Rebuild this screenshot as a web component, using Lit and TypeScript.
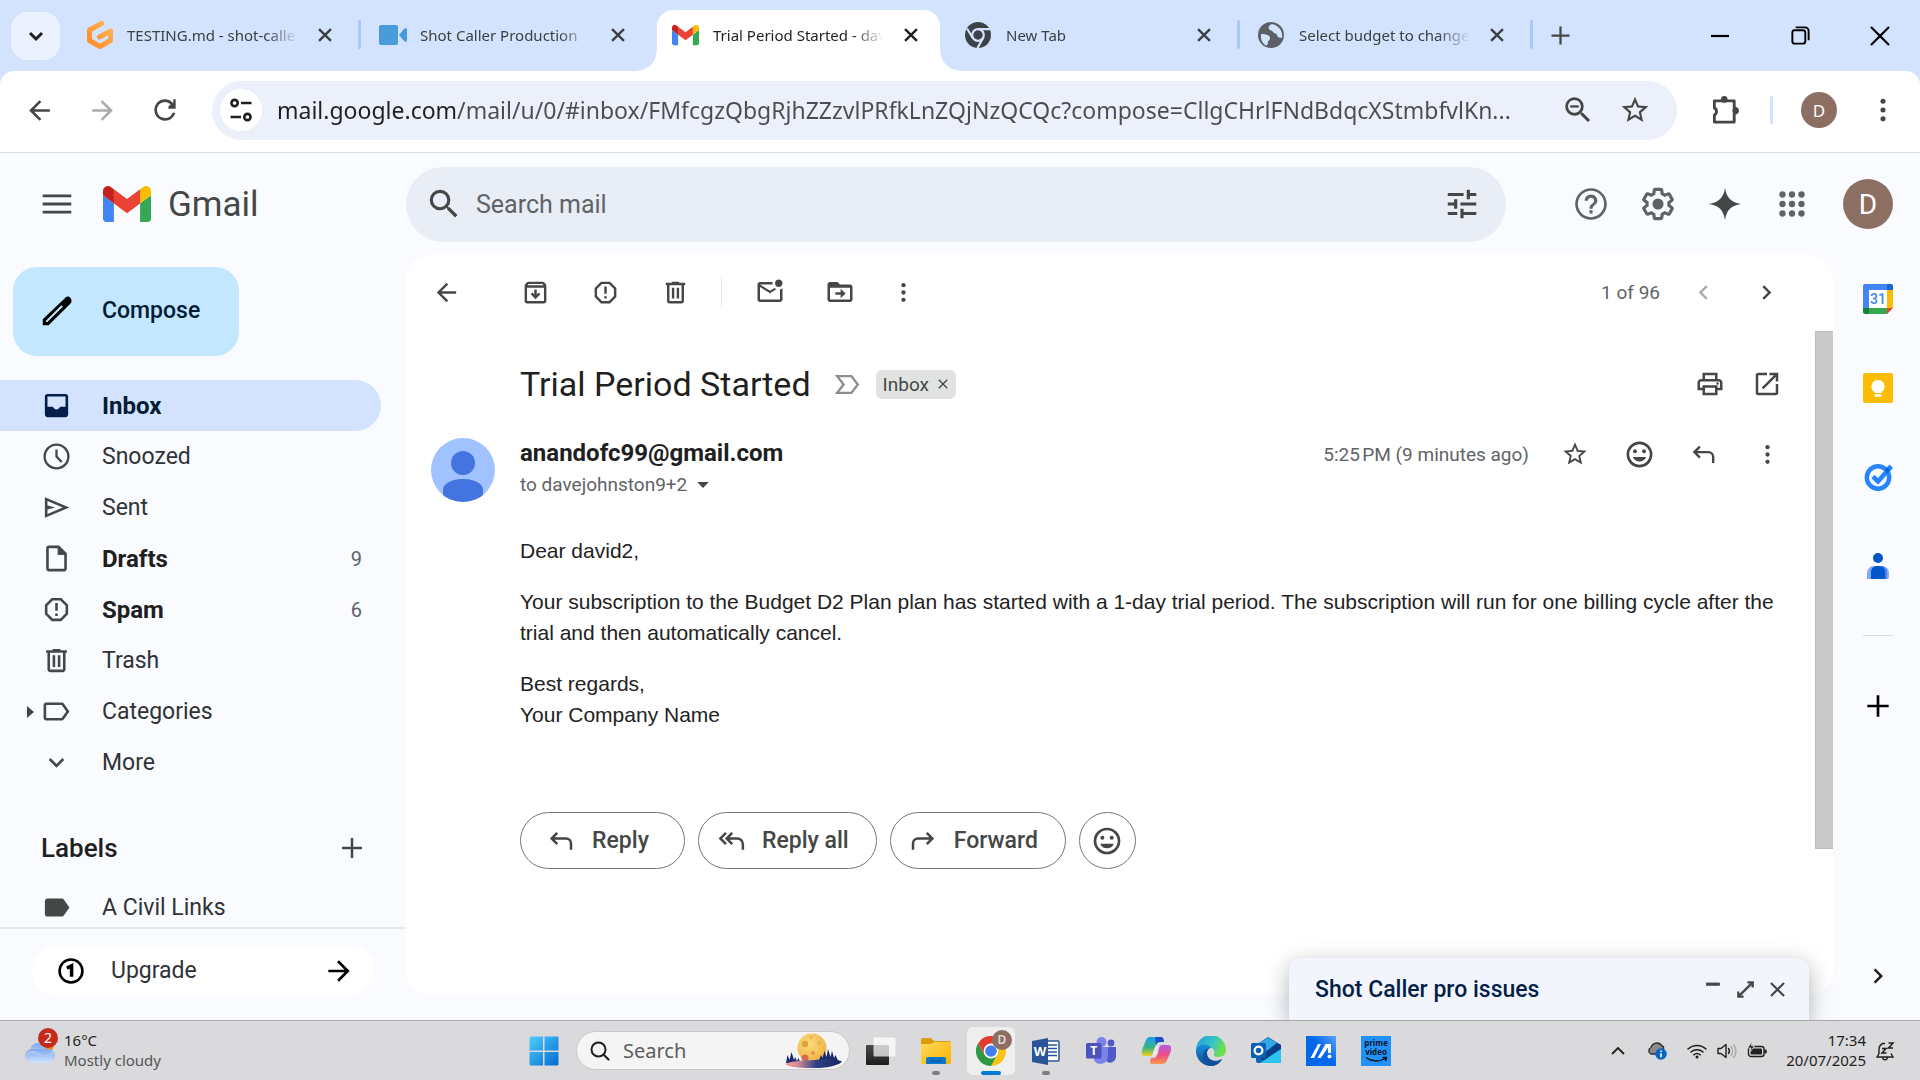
import { LitElement, html, css, svg, nothing, TemplateResult } from "lit";
import { customElement } from "lit/decorators.js";
import { classMap } from "lit/directives/class-map.js";

const ring = svg`<circle cx="12" cy="12" r="9" fill="none" stroke="currentColor" stroke-width="2"/>`;
const SEARCH = "M15.5 14h-.79l-.28-.27A6.471 6.471 0 0 0 16 9.5 6.5 6.5 0 1 0 9.5 16c1.61 0 3.09-.59 4.23-1.57l.27.28v.79l5 4.99L20.49 19l-4.99-5zm-6 0C7.01 14 5 11.99 5 9.5S7.01 5 9.5 5 14 7.01 14 9.5 11.99 14 9.5 14z";

/* Glyphs on a 24 x 24 grid, drawn in the current colour. */
const GLYPHS: Record<string, unknown> = {
  menu: svg`<path d="M3 18h18v-1.800H3zM3 12.900h18v-1.800H3zM3 6v1.800h18V6z"/>`,
  search: svg`<path d=${SEARCH}/>`,
  zoomOut: svg`<path d=${SEARCH}/><path d="M6.500 8.700h6v1.600h-6z"/>`,
  tune: svg`<path d="M3 17v2h6v-2H3zM3 5v2h10V5H3zm10 16v-2h8v-2h-8v-2h-2v6h2zM7 9v2H3v2h4v2h2V9H7zm14 4v-2H11v2h10zm-6-4h2V7h4V5h-4V3h-2v6z"/>`,
  help: svg`<path d="M11 18h2v-2h-2v2zm1-16C6.480 2 2 6.480 2 12s4.480 10 10 10 10-4.480 10-10S17.520 2 12 2zm0 18.300c-4.550 0-8.300-3.750-8.300-8.300s3.750-8.300 8.300-8.300 8.300 3.750 8.300 8.300-3.750 8.300-8.300 8.300zm0-14.300c-2.210 0-4 1.790-4 4h2c0-1.100.9-2 2-2s2 .9 2 2c0 2-3 1.750-3 5h2c0-2.250 3-2.500 3-5 0-2.210-1.790-4-4-4z"/>`,
  gear: svg`<path d="M13.85 22.25h-3.700c-.74 0-1.360-.54-1.450-1.270l-.27-1.890c-.27-.14-.53-.29-.79-.46l-1.800.72c-.7.26-1.470-.03-1.810-.65L2.200 15.530c-.35-.66-.2-1.440.36-1.880l1.530-1.190c-.01-.15-.02-.3-.02-.46 0-.15.01-.31.02-.46l-1.520-1.190c-.59-.45-.74-1.260-.37-1.880l1.850-3.190c.34-.62 1.110-.9 1.790-.63l1.810.73c.26-.17.52-.32.78-.46l.27-1.910c.09-.7.71-1.250 1.440-1.250h3.700c.74 0 1.360.54 1.450 1.270l.27 1.890c.27.14.53.29.79.46l1.800-.72c.71-.26 1.480.03 1.820.65l1.840 3.180c.36.66.2 1.440-.36 1.880l-1.520 1.190c.01.15.02.3.02.46s-.01.31-.02.46l1.520 1.190c.56.45.72 1.230.37 1.860l-1.860 3.220c-.34.62-1.110.9-1.800.63l-1.800-.72c-.26.17-.52.32-.78.46l-.27 1.910c-.1.68-.72 1.220-1.460 1.220zm-3.230-2h2.760l.37-2.550.53-.22c.44-.18.88-.44 1.340-.78l.45-.34 2.380.96 1.380-2.400-2.030-1.580.07-.56c.03-.26.06-.51.06-.78s-.03-.53-.06-.78l-.07-.56 2.030-1.580-1.390-2.400-2.390.96-.45-.35c-.42-.32-.87-.58-1.330-.77l-.52-.22-.37-2.550h-2.760l-.37 2.550-.53.21c-.44.19-.88.44-1.340.79l-.45.33-2.380-.95-1.390 2.390 2.030 1.580-.07.56a7 7 0 0 0-.06.79c0 .26.02.53.06.78l.07.56-2.030 1.580 1.380 2.400 2.390-.96.45.35c.43.33.86.58 1.330.77l.53.22.38 2.550z"/><circle cx="12" cy="12" r="3.500"/>`,
  spark: svg`<path d="M12 1.800C12.800 8 16 11.200 22.200 12 16 12.800 12.800 16 12 22.200 11.200 16 8 12.800 1.800 12 8 11.200 11.200 8 12 1.800z"/>`,
  apps: svg`${[6, 12, 18].map((y) => [6, 12, 18].map((x) => svg`<circle cx=${x} cy=${y} r="2"/>`))}`,
  back: svg`<path d="M20 11H7.830l5.590-5.590L12 4l-8 8 8 8 1.410-1.410L7.830 13H20v-2z"/>`,
  forward: svg`<path d="M12 4l-1.410 1.410L16.170 11H4v2h12.170l-5.580 5.590L12 20l8-8z"/>`,
  reload: svg`<path d="M17.650 6.350A7.958 7.958 0 0 0 12 4c-4.420 0-7.990 3.580-7.990 8s3.570 8 7.990 8c3.730 0 6.840-2.550 7.730-6h-2.080A5.990 5.990 0 0 1 12 18c-3.310 0-6-2.690-6-6s2.690-6 6-6c1.660 0 3.140.69 4.220 1.780L14.500 9.500V11H20V4h-1.800v2.900z"/>`,
  star: svg`<path d="M22 9.240l-7.190-.62L12 2 9.190 8.630 2 9.240l5.460 4.730L5.820 21 12 17.270 18.180 21l-1.630-7.030L22 9.240zM12 15.400l-3.760 2.270 1-4.280-3.320-2.880 4.380-.38L12 6.100l1.710 4.040 4.380.38-3.320 2.880 1 4.280L12 15.400z"/>`,
  puzzle: svg`<path d="M4.500 5.500h14v5a2 2 0 0 1 0 4v6h-14v-5a2.800 2.800 0 0 0 0-5z" fill="none" stroke="currentColor" stroke-width="2" stroke-linejoin="round"/><circle cx="11.500" cy="4.500" r="2.300"/><circle cx="19.500" cy="12.500" r="2.300"/>`,
  more: svg`<circle cx="12" cy="5.500" r="1.900"/><circle cx="12" cy="12" r="1.900"/><circle cx="12" cy="18.500" r="1.900"/>`,
  sliders: svg`<g fill="none" stroke="currentColor" stroke-width="2.200"><circle cx="6.500" cy="6" r="2.700"/><path d="M12 6h9M3 18h9"/><circle cx="17.500" cy="18" r="2.700"/></g>`,
  archive: svg`<path d="M20.540 5.230l-1.390-1.680C18.880 3.210 18.470 3 18 3H6c-.47 0-.88.21-1.160.55L3.460 5.230C3.170 5.570 3 6.020 3 6.500V19c0 1.100.9 2 2 2h14c1.100 0 2-.9 2-2V6.500c0-.48-.17-.93-.46-1.270zM6.240 5h11.520l.83 1H5.420l.82-1zM5 19V8h14v11H5z"/><path d="M11 9.500v4.200l-1.600-1.600L8 13.500l4 4 4-4-1.400-1.400-1.600 1.600V9.500z"/>`,
  report: svg`<path d="M15.730 3H8.270L3 8.270v7.460L8.270 21h7.460L21 15.730V8.270L15.730 3zM19 14.900L14.900 19H9.100L5 14.900V9.100L9.100 5h5.800L19 9.100v5.800z"/><path d="M11 7h2v6h-2zM11 15h2v2h-2z"/>`,
  trash: svg`<path d="M15 4V3H9v1H4v2h1v13c0 1.100.9 2 2 2h10c1.100 0 2-.9 2-2V6h1V4h-5zm2 15H7V6h10v13zM9 8h2v9H9zm4 0h2v9h-2z"/>`,
  unread: svg`<path d="M22 8.980V18c0 1.100-.9 2-2 2H4c-1.100 0-2-.9-2-2V6c0-1.100.9-2 2-2h10.100c-.06.32-.1.66-.1 1s.04.68.1 1H4l8 5 3.670-2.290c.47.43 1.020.76 1.630.98L12 13 4 8v10h16V9.900c.74-.15 1.420-.48 2-.92zM16 5c0 1.660 1.340 3 3 3s3-1.340 3-3-1.340-3-3-3-3 1.340-3 3z"/>`,
  move: svg`<path d="M20 6h-8l-2-2H4c-1.100 0-2 .9-2 2v12c0 1.100.9 2 2 2h16c1.100 0 2-.9 2-2V8c0-1.100-.9-2-2-2zm0 12H4V8.500h16V18z"/><path d="M12.500 17l4-3.800-4-3.800v2.800H8.300v2h4.200z"/>`,
  chevronLeft: svg`<path d="M15.410 7.410L14 6l-6 6 6 6 1.410-1.410L10.830 12z"/>`,
  chevronRight: svg`<path d="M10 6L8.590 7.410 13.170 12l-4.580 4.590L10 18l6-6z"/>`,
  chevronDown: svg`<path d="M7.410 8.590L12 13.170l4.590-4.580L18 10l-6 6-6-6z"/>`,
  tabDown: svg`<path d="M6 9l6 6 6-6" fill="none" stroke="currentColor" stroke-width="3"/>`,
  close: svg`<path d="M19 6.410L17.590 5 12 10.590 6.410 5 5 6.410 10.590 12 5 17.590 6.410 19 12 13.410 17.590 19 19 17.590 13.410 12z"/>`,
  tabClose: svg`<path d="M5.500 5.500l13 13M18.500 5.500l-13 13" stroke="currentColor" stroke-width="2.600"/>`,
  plus: svg`<path d="M20 11h-7V4h-2v7H4v2h7v7h2v-7h7z"/>`,
  print: svg`<path d="M19 8h-1V3H6v5H5c-1.660 0-3 1.340-3 3v6h4v4h12v-4h4v-6c0-1.660-1.340-3-3-3zM8 5h8v3H8V5zm8 14H8v-4h8v4zm2-4v-2H6v2H4v-4c0-.55.45-1 1-1h14c.55 0 1 .45 1 1v4h-2z"/><circle cx="18" cy="11.500" r="1"/>`,
  popout: svg`<path d="M12 3H5a2 2 0 0 0-2 2v14a2 2 0 0 0 2 2h14c1.100 0 2-.9 2-2v-7h-2v7H5V5h7V3zM14 3v2h3.590l-9.830 9.830 1.410 1.410L19 6.410V10h2V3h-7z"/>`,
  smile: svg`${ring}<circle cx="8.500" cy="9.500" r="1.500"/><circle cx="15.500" cy="9.500" r="1.500"/><path d="M12 17.500c2.330 0 4.310-1.300 5.110-3.500H6.890c.8 2.200 2.780 3.500 5.110 3.500z"/>`,
  reply: svg`<path d="M9 5.500L4.500 10 9 14.500M4.500 10H16a4 4 0 0 1 4 4v5" fill="none" stroke="currentColor" stroke-width="2"/>`,
  replyAll: svg`<path d="M8 5.500L3.500 10 8 14.500M13 5.500L8.500 10l4.500 4.500M8.500 10H17a4.500 4.500 0 0 1 4.500 4.500V19" fill="none" stroke="currentColor" stroke-width="2"/>`,
  forwardMail: svg`<path d="M15 5.500l4.500 4.500-4.500 4.500M19.500 10H8a4 4 0 0 0-4 4v5" fill="none" stroke="currentColor" stroke-width="2"/>`,
  important: svg`<path d="M4 5.500h11l5 6.500-5 6.500H4l5-6.500z" fill="none" stroke="currentColor" stroke-width="1.800"/>`,
  clock: svg`<circle cx="12" cy="12" r="9.200" fill="none" stroke="currentColor" stroke-width="1.800"/><path d="M12 6.500V12l4 4.300" fill="none" stroke="currentColor" stroke-width="1.800"/>`,
  send: svg`<path d="M3 20V4l19 8-19 8zm2-3l11.850-5L5 7v3.500l6 1.500-6 1.500V17z"/>`,
  draft: svg`<path d="M14 2H6c-1.100 0-2 .9-2 2v16c0 1.100.89 2 1.990 2H18c1.100 0 2-.9 2-2V8l-6-6zM6 20V4h7v5h5v11H6z"/><path d="M13 3h1l5 5v1h-6z"/>`,
  label: svg`<path d="M17.630 5.840C17.270 5.330 16.670 5 16 5L4 5.010C2.900 5.010 2 5.900 2 7v10c0 1.100.9 1.990 2 1.990L16 19c.67 0 1.270-.33 1.630-.84L22 12l-4.370-6.160zM16 17H4V7h12l3.550 5L16 17z"/>`,
  labelFull: svg`<path d="M17.630 5.840C17.270 5.330 16.670 5 16 5H5C3.900 5 3 5.900 3 7v10c0 1.100.9 2 2 2h11c.67 0 1.270-.33 1.630-.84L22 12l-4.370-6.160z"/>`,
  inbox: svg`<path d="M19 3H5c-1.100 0-2 .9-2 2v14c0 1.100.9 2 2 2h14c1.100 0 2-.9 2-2V5c0-1.100-.9-2-2-2zm0 10h-4.200c-.5 1.200-1.400 2-2.800 2s-2.300-.8-2.800-2H5V5h14v8z"/>`,
  pencil: svg`<path d="M20.400 3.600a2.200 2.200 0 0 0-3.100 0L3 17.250V21h3.750L20.400 7.400a2.700 2.700 0 0 0 0-3.800zM5.900 19H5v-.9l9.800-9.700.9.900z"/>`,
  one: svg`<circle cx="12" cy="12" r="9.800" fill="none" stroke="currentColor" stroke-width="2.200"/><path d="M8.500 9.500L12.500 7.500V17" fill="none" stroke="currentColor" stroke-width="3"/>`,
  caretDown: svg`<path d="M5 8.500h14l-7 7z"/>`,
  expand: svg`<path d="M14 4.500h5.500V10M10 19.500H4.500V14M19.500 4.500l-15 15" fill="none" stroke="currentColor" stroke-width="2.400"/>`,
  dash: svg`<path d="M4.500 5h15v3.500h-15z"/>`,
  winMin: svg`<path d="M3 12h18" stroke="currentColor" stroke-width="2.200"/>`,
  winRestore: svg`<g fill="none" stroke="currentColor" stroke-width="2"><rect x="3.500" y="6.500" width="13.500" height="14" rx="2.500"/><path d="M7 3.500h9.500a4 4 0 0 1 4 4V17"/></g>`,
  winClose: svg`<path d="M3 3l18 18M21 3L3 21" stroke="currentColor" stroke-width="2.200"/>`,
};

const glyph = (name: string, size: number) =>
  html`<svg class="glyph" width=${size} height=${size} viewBox="0 0 24 24" fill="currentColor" aria-hidden="true">${GLYPHS[name]}</svg>`;

const iconButton = (name: string, label: string, size: number, extra = "") =>
  html`<button type="button" class="icon-button ${extra}" aria-label=${label}>${glyph(name, size)}</button>`;

const art = (w: number, h: number, box: string, body: unknown) =>
  html`<svg class="glyph" width=${w} height=${h} viewBox=${box} aria-hidden="true">${body}</svg>`;

const gmailMark = (w: number, h: number) => art(w, h, "52 42 88 66", svg`
  <path fill="#4285f4" d="M58 108h14V74L52 59v43c0 3.320 2.690 6 6 6"/>
  <path fill="#34a853" d="M120 108h14c3.320 0 6-2.690 6-6V59l-20 15"/>
  <path fill="#fbbc04" d="M120 48v26l20-15v-8c0-7.420-8.470-11.650-14.400-7.200"/>
  <path fill="#ea4335" d="M72 74V48l24 18 24-18v26L96 92"/>
  <path fill="#c5221f" d="M52 51v8l20 15V48l-5.600-4.200c-5.940-4.450-14.400-.22-14.400 7.200"/>`);

const gitpodMark = art(28, 28, "0 0 28 28", svg`
  <defs><linearGradient id="gp" x1="1" y1="0" x2="0" y2="1"><stop offset="0" stop-color="#ffb45b"/><stop offset="1" stop-color="#ff8a1f"/></linearGradient></defs>
  <path d="M15.500 2.500L3.500 9v10.500L14 25.500l10.500-6V10L13.500 16" fill="none" stroke="url(#gp)" stroke-width="5" stroke-linecap="round" stroke-linejoin="round"/>`);

const cameraMark = art(28, 28, "0 0 28 28", svg`
  <rect x="0" y="4" width="19" height="20" rx="2" fill="#4a9bdb"/><path d="M20 14l5-6c1.500-1 3-1 3 0v12c0 1-1.500 1-3 0z" fill="#4a9bdb"/>`);

const chromeGrey = art(26, 26, "0 0 26 26", svg`
  <circle cx="13" cy="13" r="13" fill="#3c4248"/><circle cx="13" cy="13" r="5.800" fill="none" stroke="#d3e2fd" stroke-width="2.200"/>
  <path d="M13 7.200h12M7.800 16L2 6.500M18 16l-5.500 10" stroke="#d3e2fd" stroke-width="2.200"/>`);

const globeGrey = art(26, 26, "0 0 26 26", svg`
  <circle cx="13" cy="13" r="13" fill="#5b6066"/>
  <path d="M3 12c5 0 9 1 9 4s-2 2-2 4c0 3-1.500 4-3 3C4 21 2.500 17 3 12zM14 2c-3 1-4 3-3 5s3 1 4 3 4 1 4 3 2 3 5 3c1-6-2-12-10-14z" fill="#d3e2fd"/>`);

const calendarMark = art(30, 30, "0 0 30 30", svg`
  <path d="M2 0h22v6H6v18H0V2a2 2 0 0 1 2-2z" fill="#4285f4"/><path d="M24 0h4a2 2 0 0 1 2 2v4h-6z" fill="#1967d2"/>
  <path d="M24 6h6v18h-6z" fill="#fbbc04"/><path d="M6 24h18v6H6z" fill="#34a853"/><path d="M0 24h6v6H2a2 2 0 0 1-2-2z" fill="#188038"/>
  <path d="M24 24h6l-6 6z" fill="#ea4335"/><path d="M6 6h18v18H6z" fill="#fff"/>
  <text x="15" y="20" text-anchor="middle" font-family="Roboto, sans-serif" font-size="14" font-weight="500" fill="#4285f4">31</text>`);

const keepMark = art(30, 30, "0 0 30 30", svg`
  <rect width="30" height="30" rx="2" fill="#fbbc04"/><path d="M15 7a6.500 6.500 0 0 0-3.500 12v1h7v-1A6.500 6.500 0 0 0 15 7zM11.500 21.200h7v2.600h-7z" fill="#fff"/>`);

const tasksMark = art(30, 30, "0 0 30 30", svg`
  <circle cx="15" cy="15.500" r="11.200" fill="none" stroke="#2684fc" stroke-width="4.400"/>
  <path d="M10 14.500l5 5L26 7" fill="none" stroke="#2684fc" stroke-width="4.600"/><path d="M22 7.500L26.500 2.500 30 6l-5 5.500z" fill="#2684fc"/><path d="M22 7.500l3-2.500 1.500 4-2.500 3z" fill="#0066da"/>`);

const contactsMark = art(30, 30, "0 0 30 30", svg`
  <circle cx="15" cy="7" r="5" fill="#0057cc"/><path d="M4 28v-6a7 7 0 0 1 7-7h8a7 7 0 0 1 7 7v4a2 2 0 0 1-2 2z" fill="#7baaf7"/>
  <path d="M8 28v-7a6 6 0 0 1 6-6h5a7 7 0 0 1 5 6v7z" fill="#4c7ff0"/><path d="M8 28v-7a6 6 0 0 1 6-6h2a6 6 0 0 1 6 6v7z" fill="#0057cc"/>`);

const personMark = art(64, 64, "0 0 64 64", svg`
  <defs><clipPath id="av"><circle cx="32" cy="32" r="32"/></clipPath></defs>
  <g clip-path="url(#av)"><rect width="64" height="64" fill="#a0c3ff"/><circle cx="32" cy="25" r="12" fill="#4374e0"/><path d="M12 64V52c0-8 12-11 20-11s20 3 20 11v12z" fill="#4374e0"/></g>`);

const weatherMark = art(30, 30, "0 0 30 30", svg`
  <defs><linearGradient id="cl" x1="0" y1="0" x2="0" y2="1"><stop offset="0" stop-color="#7fa8ee"/><stop offset="1" stop-color="#cfe3fd"/></linearGradient></defs>
  <circle cx="22" cy="10" r="7" fill="#f28b24"/><circle cx="13" cy="16" r="8" fill="url(#cl)"/><rect x="0" y="14" width="30" height="14" rx="7" fill="url(#cl)"/><path d="M2 22a5 5 0 0 1 6-5c5 1 6 4 12 4 3 0 7-2 9-4" fill="none" stroke="#a9c8f7" stroke-width="2"/>`);

const windowsMark = art(30, 30, "0 0 30 30", svg`
  <defs><linearGradient id="wn" gradientUnits="userSpaceOnUse" x1="0" y1="0" x2="30" y2="30"><stop offset="0" stop-color="#4fd0fd"/><stop offset="1" stop-color="#0369cf"/></linearGradient></defs>
  <path d="M1.500.5h12.500v14H.5v-13zM15.500.5h13l1 1v13h-14zM.5 16H14v13.500H1.500l-1-1zM15.500 16h14v12.500l-1 1h-13z" fill="url(#wn)"/>`);

const moonScene = art(57, 36, "0 0 57 36", svg`
  <defs><radialGradient id="mo" cx=".4" cy=".35" r=".7"><stop offset="0" stop-color="#fbdc7c"/><stop offset="1" stop-color="#f0b040"/></radialGradient>
  <linearGradient id="ri" x1="0" x2="1"><stop offset="0" stop-color="#f29a8e"/><stop offset=".2" stop-color="#d98f95"/><stop offset=".55" stop-color="#2f4187"/><stop offset="1" stop-color="#16245f"/></linearGradient></defs>
  <circle cx="27" cy="15" r="14.500" fill="url(#mo)"/><circle cx="20" cy="11" r="3.200" fill="#e0a238"/><circle cx="34" cy="10" r="2" fill="#e9b452"/><circle cx="28" cy="20" r="2" fill="#ea9a4d"/><circle cx="26" cy="4.500" r="1.800" fill="#e9b452"/><circle cx="20" cy="25" r="3.500" fill="#d4694f"/>
  <path d="M1 30l1.500-8 2 5 2-8 2.500 8 1-3 2 4 1.500-3 2 5zM34 27l2-5 1.500 3 2-7 2 6 1.500-8 2.500 8 1.500-6 2 7 1.500-3 4 9z" fill="#1a2a6b"/>
  <path d="M0 31c8-4 22-3 34-4.500s20 .5 23 2c-4 4-14 6.500-26 6.500S4 35 0 31z" fill="url(#ri)"/>`);

const taskViewMark = art(30, 30, "0 0 30 30", svg`
  <defs><linearGradient id="tv" x1="0" y1="0" x2="0" y2="1"><stop offset="0" stop-color="#4a4a48"/><stop offset="1" stop-color="#1d1d1c"/></linearGradient></defs>
  <rect x="0" y="9" width="23" height="20" rx="1" fill="url(#tv)"/><rect x="7.500" y="1.500" width="22" height="19" rx="1" fill="#fff" fill-opacity=".72"/>`);

const folderMark = art(30, 30, "0 0 30 30", svg`
  <defs><linearGradient id="fo" x1="0" y1="0" x2="1" y2="1"><stop offset="0" stop-color="#ffd95c"/><stop offset="1" stop-color="#f9b300"/></linearGradient></defs>
  <path d="M0 4a2 2 0 0 1 2-2h8l3 3h15l2 1v8H0z" fill="#dc9c05"/><path d="M0 8h10l3-2h17v21a1 1 0 0 1-1 1H1a1 1 0 0 1-1-1z" fill="url(#fo)"/>
  <path d="M5 28v-5a2 2 0 0 1 2-2h16a2 2 0 0 1 2 2v5z" fill="#0d77cc"/><path d="M9 25h12" stroke="#0a4f92" stroke-width="1.200"/>`);

const chromeMark = art(30, 30, "0 0 30 30", svg`
  <path d="M15 15V7.500h13A15 15 0 0 1 15 30z" fill="#fbc116"/><path d="M15 30A15 15 0 0 1 2 7.500L8.500 18.800 15 22.500l5-2z" fill="#2b9846"/>
  <path d="M2 7.500A15 15 0 0 1 28 7.500H15L8.500 18.800z" fill="#e33b2e"/><circle cx="15" cy="15" r="7.400" fill="#fff"/><circle cx="15" cy="15" r="5.800" fill="#3f7fee"/>`);

const wordMark = art(30, 30, "0 0 30 30", svg`
  <rect x="13" y="5" width="15" height="20" rx="1" fill="#fff" stroke="#2a5699" stroke-width="1.500"/><path d="M17 9h9M17 12.500h9M17 16h9M17 19.500h9" stroke="#2a5699" stroke-width="1.600"/><path d="M1 5L17 2v27L1 26z" fill="#2a5699"/>
  <text x="9" y="20" text-anchor="middle" font-family="Open Sans, sans-serif" font-size="13" font-weight="700" fill="#fff">W</text>`);

const teamsMark = art(30, 30, "0 0 30 30", svg`
  <circle cx="15.500" cy="6" r="5" fill="#7b83eb"/><circle cx="25" cy="7" r="3.400" fill="#5059c9"/><path d="M20 11h10v9a6 6 0 0 1-10 5z" fill="#5059c9"/><path d="M8 11h14v10a7.500 7.500 0 0 1-14 3z" fill="#7b83eb"/>
  <rect x="0" y="7" width="15.500" height="15.500" rx="1.500" fill="#4b53bc"/><text x="7.800" y="19" text-anchor="middle" font-family="Open Sans, sans-serif" font-size="12" font-weight="700" fill="#fff">T</text>`);

const copilotMark = art(30, 30, "0 0 30 30", svg`
  <defs><linearGradient id="c1" x1="0" y1="0" x2="0" y2="1"><stop offset="0" stop-color="#18a0ee"/><stop offset=".55" stop-color="#35b583"/><stop offset="1" stop-color="#f2cf1d"/></linearGradient>
  <linearGradient id="c2" x1="0" y1="0" x2="0" y2="1"><stop offset="0" stop-color="#b658e8"/><stop offset=".55" stop-color="#ee4f80"/><stop offset="1" stop-color="#fb9a4b"/></linearGradient></defs>
  <path d="M9 1h10c3 0 3 2 4 5h-4c-3 0-4 2-5 5l-2 7c-1 2-2 2-5 2H4c-3 0-4-2-3-6L5 4c1-2 2-3 4-3z" fill="url(#c1)"/><path d="M14 1h6c2 0 3 2 3 5h-4c-2 0-3 1-4 3z" fill="#1b50c5"/>
  <path d="M21 28H11c-3 0-2-3-1-6h2c3 0 4-2 5-5l1-5c1-3 2-3 5-3h4c3 0 4 3 3 6l-4 9c-1 3-3 4-5 4z" fill="url(#c2)"/><path d="M14 11l4-1-3 9-4 1z" fill="#f0e6ee"/>`);

const edgeMark = art(30, 30, "0 0 30 30", svg`
  <defs><linearGradient id="e1" x1="0" y1="0" x2="1" y2=".4"><stop offset="0" stop-color="#1b9be0"/><stop offset=".6" stop-color="#36c4c4"/><stop offset="1" stop-color="#6fe04c"/></linearGradient>
  <linearGradient id="e2" x1="0" y1="0" x2="0" y2="1"><stop offset="0" stop-color="#1790dc"/><stop offset="1" stop-color="#124a93"/></linearGradient></defs>
  <path d="M0 14A15 15 0 0 1 30 14c0 5-4 7-8 7-4 0-5-1.500-4-3s0-5-4-6C9 11 3 11 0 16z" fill="url(#e1)"/>
  <path d="M0 16c0-6 6-9 11-7 2 1 4 2 4 3-3 0-5 3-4 7 1 5 8 8 15 4-2 4-6 7-11 7A15 15 0 0 1 0 16z" fill="url(#e2)"/><path d="M15 12c-4 1-5 5-3 9 3 5 10 5 14 2-2 4-6 7-11 7-6-2-9-7-8-11 1-5 4-7 8-7z" fill="#0f529f"/><path d="M14.500 12c3 0 4.500 3 3.500 6-1 2 0 3 3 3.300-5 1.500-9-.5-9.300-4.300 0-2.500 1-4.500 2.800-5z" fill="#dad9db"/>`);

const outlookMark = art(30, 30, "0 0 30 30", svg`
  <path d="M5 9L17 1l13 8v16a2 2 0 0 1-2 2H7a2 2 0 0 1-2-2z" fill="#1066b5"/><path d="M5 9L17 2l9 5L12 18z" fill="#32a9e7"/><path d="M30 9v5L14 26l-6-5L26 7z" fill="#0a3f86"/><path d="M30 13v12a2 2 0 0 1-2 2H9z" fill="#2bc3f2"/>
  <rect x="0" y="7" width="15" height="15" rx="1.500" fill="#0b5fb4"/><circle cx="7.500" cy="14.500" r="3.900" fill="none" stroke="#fff" stroke-width="2.200"/>`);

const asusMark = art(30, 30, "0 0 30 30", svg`
  <defs><linearGradient id="as" x1="1" y1="0" x2=".2" y2=".7"><stop offset="0" stop-color="#5aa4ff"/><stop offset=".6" stop-color="#0467e8"/></linearGradient></defs>
  <rect width="30" height="30" fill="url(#as)"/><path d="M4.500 22L12 8h3L8 22zM11.500 22L19.500 8H25v9h-3v-5.500L14.800 22z" fill="#fff"/><circle cx="23.500" cy="20.500" r="2" fill="#fff"/>`);

const primeMark = art(30, 30, "0 0 30 30", svg`
  <rect width="30" height="30" fill="#1f93fa"/><g font-family="Open Sans, sans-serif" font-weight="700" font-size="8" fill="#0b1526" text-anchor="middle"><text x="15" y="10">prime</text><text x="15" y="19">video</text></g>
  <path d="M5 21.500c6 4.500 14 4.500 20 .5M21.500 21.500H25.500L24.500 25" fill="none" stroke="#0b1526" stroke-width="1.500"/>`);

const cloudMark = art(20, 20, "0 0 20 20", svg`
  <path d="M4 13a3.500 3.500 0 0 1 0-6.500A6 6 0 0 1 15 5c2 0 2 3 1 4l-6 4z" fill="#8b8b8b" stroke="#2b2b2b" stroke-width="1.300"/><circle cx="14" cy="13" r="5.800" fill="#0a66c4"/><path d="M14 12.200v4M14 9.500v1.500" stroke="#fff" stroke-width="1.600"/>`);

const wifiMark = art(20, 20, "0 0 20 20", svg`
  <g fill="none" stroke="#1f1f1f" stroke-width="1.500" stroke-linecap="round"><path d="M1 8a13 13 0 0 1 18 0M4 11a9 9 0 0 1 12 0M6.800 13.800a5 5 0 0 1 6.400 0"/></g><circle cx="10" cy="16" r="1.500" fill="#1f1f1f"/>`);

const volumeMark = art(20, 20, "0 0 20 20", svg`
  <g fill="none" stroke-width="1.400" stroke-linecap="round"><path d="M1 7.500h3L9 3.500v13l-5-4H1z" stroke="#1f1f1f" stroke-linejoin="round"/><path d="M11.500 7.500a4 4 0 0 1 0 5" stroke="#1f1f1f"/><path d="M14 5.500a7 7 0 0 1 0 9M16.500 3.500a10 10 0 0 1 0 13" stroke="#a9a9a9"/></g>`);

const batteryMark = art(20, 20, "0 0 20 20", svg`
  <rect x="1.500" y="5.500" width="15.500" height="10" rx="2.500" fill="none" stroke="#1f1f1f" stroke-width="1.400"/><rect x="3.500" y="7.500" width="11.500" height="6" rx="1" fill="#1f1f1f"/><path d="M17.500 8.500h1.200a1 1 0 0 1 1 1v2a1 1 0 0 1-1 1h-1.200z" fill="#1f1f1f"/><path d="M5 .5L.8 7H4L3 11l4.500-6H4.500z" fill="#1f1f1f" stroke="#dadada" stroke-width=".8"/>`);

const bellMark = art(22, 22, "0 0 22 22", svg`
  <path d="M11 3.500H9c-3 1-4 3-4 6v4L3 17h16l-2-3.500M8.500 17.500c.5 3 4.500 3 5 0" fill="none" stroke="#1f1f1f" stroke-width="1.400"/><path d="M8 8.500h4L8 13h4.500M14.500 3h4.500l-4.500 5H19" fill="none" stroke="#1f1f1f" stroke-width="1.500"/>`);

interface Tab { title: string; mark: TemplateResult; active?: boolean; rule?: boolean; }
const TABS: Tab[] = [
  { title: "TESTING.md - shot-calle", mark: gitpodMark, rule: true },
  { title: "Shot Caller Production", mark: cameraMark },
  { title: "Trial Period Started - dav", mark: gmailMark(27, 24), active: true },
  { title: "New Tab", mark: chromeGrey, rule: true },
  { title: "Select budget to change", mark: globeGrey, rule: true },
];

interface Folder { name: string; icon: string; count?: number; bold?: boolean; active?: boolean; caret?: boolean; }
const FOLDERS: Folder[] = [
  { name: "Inbox", icon: "inbox", bold: true, active: true },
  { name: "Snoozed", icon: "clock" },
  { name: "Sent", icon: "send" },
  { name: "Drafts", icon: "draft", count: 9, bold: true },
  { name: "Spam", icon: "report", count: 6, bold: true },
  { name: "Trash", icon: "trash" },
  { name: "Categories", icon: "label", caret: true },
  { name: "More", icon: "chevronDown" },
];

const APPS = [
  { name: "Task view", mark: taskViewMark },
  { name: "File Explorer", mark: folderMark, open: true },
  { name: "Google Chrome", mark: chromeMark, focused: true },
  { name: "Word", mark: wordMark, open: true },
  { name: "Teams", mark: teamsMark },
  { name: "Copilot", mark: copilotMark },
  { name: "Edge", mark: edgeMark },
  { name: "Outlook", mark: outlookMark },
  { name: "MyASUS", mark: asusMark },
  { name: "Prime Video", mark: primeMark },
];

const shared = css`
  :host, * { box-sizing: border-box; }
  button, input { font: inherit; color: inherit; }
  button { border: 0; padding: 0; background: none; cursor: pointer; }
  input { border: 0; outline: 0; background: none; padding: 0; min-width: 0; }
  a { color: inherit; text-decoration: none; }
  .glyph { display: block; flex: none; }
  .icon-button { display: flex; align-items: center; justify-content: center; width: 40px; height: 40px; flex: none; color: #444746; }
  .dim { opacity: 0.45; }
`;

@customElement("browser-chrome")
class BrowserChrome extends LitElement {
  static styles = [shared, css`
    :host { display: block; background: #d3e2fd; color: #3c4043; font-family: "Noto Sans", "Open Sans", sans-serif; }
    .strip { display: flex; align-items: center; height: 71px; padding-left: 11px; }
    .tab-list { display: flex; align-items: center; justify-content: center; width: 49px; height: 48px; margin-right: 6px; border-radius: 16px; background: #ebf1fe; color: #1f1f1f; flex: none; }
    .tabs { display: flex; flex: 0 1 1465px; min-width: 0; align-self: stretch; }
    .tab { position: relative; display: flex; align-items: center; flex: 1 1 0; min-width: 0; gap: 13px; padding: 0 14px 2px 20px; }
    .rule::after { content: ""; position: absolute; right: -2px; top: 20px; width: 3px; height: 29px; border-radius: 2px; background: #a8c7fa; }
    .mark { width: 28px; flex: none; }
    .title { flex: 1; min-width: 0; overflow: hidden; white-space: nowrap; font-size: 15px; line-height: 24px; mask-image: linear-gradient(90deg, #000 calc(100% - 32px), transparent); }
    .tab-close { display: flex; align-items: center; justify-content: center; width: 40px; height: 40px; flex: none; margin-left: -6px; color: #3c4043; }
    .active { color: #1f1f1f; }
    .active::before { content: ""; position: absolute; inset: 10px 5px 0; border-radius: 16px 16px 0 0; background: #fff; }
    .active::after { content: ""; position: absolute; left: -15px; right: -15px; bottom: 0; height: 20px; background: radial-gradient(circle at 0 0, transparent 19px, #fff 20px) left / 20px 20px no-repeat, radial-gradient(circle at 100% 0, transparent 19px, #fff 20px) right / 20px 20px no-repeat; }
    .active > * { position: relative; z-index: 1; }
    .active .tab-close { color: #1f1f1f; }
    .new-tab { margin-left: 9px; }
    .controls { display: flex; margin-left: auto; }
    .control { width: 80px; height: 71px; display: flex; align-items: center; justify-content: center; color: #000; }
    .bar { display: flex; align-items: center; height: 82px; padding: 0 17px 3px 19px; border-radius: 14px 14px 0 0; border-bottom: 1px solid #dcdddf; background: #fff; }
    .nav { display: flex; gap: 23px; margin-right: 27px; }
    .omnibox { display: flex; align-items: center; flex: 1; min-width: 0; height: 59px; padding: 0 26px 0 8px; border-radius: 30px; background: #ebf0fa; color: #444746; }
    .site { display: flex; align-items: center; justify-content: center; width: 42px; height: 42px; flex: none; margin-right: 15px; border-radius: 50%; background: #fff; color: #1f1f1f; }
    .url { flex: 1; height: 40px; font-size: 23px; margin-right: 24px; -webkit-text-fill-color: transparent; background: linear-gradient(90deg, #1f1f1f 180px, #4a4d50 180px); -webkit-background-clip: text; background-clip: text; }
    .actions { display: flex; gap: 25px; }
    .actions .icon-button { width: 32px; }
    .extensions { margin-left: 28px; }
    .divider { width: 3px; height: 28px; margin: 0 28px 0 25px; border-radius: 2px; background: #d3e2fd; }
    .profile { width: 36px; height: 36px; margin-right: 26px; border-radius: 50%; background: #8d6e63; color: #fff; font-size: 17px; }
  `];

  render() {
    return html`
      <div class="strip">
        <button type="button" class="tab-list" aria-label="Search tabs">${glyph("tabDown", 24)}</button>
        <div class="tabs">
          ${TABS.map((t) => html`
            <div class=${classMap({ tab: true, active: !!t.active, rule: !!t.rule })}>
              <span class="mark">${t.mark}</span>
              <span class="title">${t.title}</span>
              <button type="button" class="tab-close" aria-label="Close tab">${glyph("tabClose", 22)}</button>
            </div>`)}
        </div>
        ${iconButton("plus", "New tab", 27, "new-tab")}
        <div class="controls">
          <button type="button" class="control" aria-label="Minimise">${glyph("winMin", 24)}</button>
          <button type="button" class="control" aria-label="Restore">${glyph("winRestore", 23)}</button>
          <button type="button" class="control" aria-label="Close">${glyph("winClose", 24)}</button>
        </div>
      </div>
      <div class="bar">
        <div class="nav">
          ${iconButton("back", "Back", 31)}
          ${iconButton("forward", "Forward", 31, "dim")}
          ${iconButton("reload", "Reload", 32)}
        </div>
        <div class="omnibox">
          <button type="button" class="site" aria-label="Site information">${glyph("sliders", 28)}</button>
          <input class="url" type="text" aria-label="Address" .value=${"mail.google.com/mail/u/0/#inbox/FMfcgzQbgRjhZZzvlPRfkLnZQjNzQCQc?compose=CllgCHrlFNdBdqcXStmbfvlKn..."}>
          <div class="actions">
            ${iconButton("zoomOut", "Zoom", 34)}
            ${iconButton("star", "Bookmark this tab", 32)}
          </div>
        </div>
        ${iconButton("puzzle", "Extensions", 34, "extensions")}
        <span class="divider"></span>
        <button type="button" class="profile" aria-label="Profile">D</button>
        ${iconButton("more", "Menu", 32)}
      </div>`;
  }
}

@customElement("mail-header")
class MailHeader extends LitElement {
  static styles = [shared, css`
    :host { display: flex; align-items: center; height: 102px; padding-right: 27px; font-family: Roboto, sans-serif; }
    .brand { display: flex; align-items: center; width: 406px; flex: none; padding-left: 37px; }
    .logo { display: flex; align-items: center; gap: 17px; margin-left: 26px; font-size: 35px; color: #444746; }
    .search { display: flex; align-items: center; flex: 1; min-width: 0; height: 75px; padding: 0 24px 0 18px; margin-right: 65px; border-radius: 38px; background: #e9eef6; }
    .query { flex: 1; height: 44px; margin-left: 12px; font-size: 25px; color: #1f1f1f; }
    .query::placeholder { color: #5f6368; opacity: 1; }
    .tools { display: flex; align-items: center; gap: 27px; }
    .tools .icon-button { color: #5f6368; }
    .tools .gemini { color: #444746; }
    .account { width: 50px; height: 50px; margin-left: 4px; border-radius: 50%; background: #8d6e63; color: #fff; font-size: 28px; }
  `];

  render() {
    return html`
      <div class="brand">
        ${iconButton("menu", "Main menu", 38)}
        <a class="logo" href="#inbox">${gmailMark(48, 36)}<span>Gmail</span></a>
      </div>
      <form class="search" role="search">
        ${iconButton("search", "Search mail", 38)}
        <input class="query" type="text" placeholder="Search mail" aria-label="Search mail">
        ${iconButton("tune", "Show search options", 38)}
      </form>
      <div class="tools">
        ${iconButton("help", "Support", 38)}
        ${iconButton("gear", "Settings", 38)}
        ${iconButton("spark", "Ask Gemini", 38, "gemini")}
        ${iconButton("apps", "Google apps", 38)}
        <button type="button" class="account" aria-label="Google Account">D</button>
      </div>`;
  }
}

@customElement("mail-sidebar")
class MailSidebar extends LitElement {
  static styles = [shared, css`
    :host { display: flex; flex-direction: column; min-height: 0; width: 406px; font-family: Roboto, sans-serif; font-size: 23px; color: #1f1f1f; }
    .scroll { flex: 1; min-height: 0; overflow: hidden; padding-top: 12px; }
    .compose { display: flex; align-items: center; gap: 26px; width: 226px; height: 89px; margin: 0 0 24px 13px; padding: 0 0 2px 25px; border-radius: 24px; background: #c2e7ff; color: #001d35; font-weight: 500; }
    .compose .glyph { color: #000; }
    .row { position: relative; display: flex; align-items: center; height: 51px; margin-right: 25px; padding: 0 19px 0 41px; border-radius: 0 26px 26px 0; color: #303235; }
    .row .glyph { color: #444746; }
    .name { margin-left: 30px; flex: 1; }
    .bold { font-size: 24px; font-weight: 700; color: #1f1f1f; }
    .current { background: #d3e3fd; color: #001d35; }
    .current .glyph { color: #041e49; }
    .count { font-size: 20px; font-weight: 400; color: #5f6368; }
    .caret { position: absolute; left: 27px; border: 6px solid transparent; border-left: 7px solid #444746; border-right: 0; }
    .labels { display: flex; align-items: center; justify-content: space-between; height: 51px; margin: 34px 34px 9px 41px; }
    .labels h2 { margin: 0; font-size: 26px; font-weight: 500; }
    .foot { border-top: 2px solid #e6e8ec; padding: 16px 31px 24px 32px; }
    .upgrade { display: flex; align-items: center; height: 51px; padding: 0 20px 0 25px; border-radius: 26px; background: #fff; color: #303235; }
    .upgrade span { flex: 1; margin-left: 26px; }
    .upgrade .glyph { color: #000; }
  `];

  render() {
    return html`
      <div class="scroll">
        <button type="button" class="compose">${glyph("pencil", 38)}<span>Compose</span></button>
        <nav>
          ${FOLDERS.map((f) => html`
            <a href="#${f.name.toLowerCase()}" class=${classMap({ row: true, bold: !!f.bold, current: !!f.active })}>
              ${f.caret ? html`<span class="caret"></span>` : nothing}
              ${glyph(f.icon, 31)}
              <span class="name">${f.name}</span>
              ${f.count ? html`<span class="count">${f.count}</span>` : nothing}
            </a>`)}
        </nav>
        <div class="labels"><h2>Labels</h2>${iconButton("plus", "Create new label", 30)}</div>
        <a href="#label" class="row">${glyph("labelFull", 31)}<span class="name">A Civil Links</span></a>
      </div>
      <div class="foot">
        <a href="#upgrade" class="upgrade">${glyph("one", 28)}<span>Upgrade</span>${glyph("forward", 32)}</a>
      </div>`;
  }
}

@customElement("mail-message")
class MailMessage extends LitElement {
  static styles = [shared, css`
    :host { display: flex; flex-direction: column; min-height: 0; overflow: hidden; border-radius: 24px; background: #fff; font-family: Roboto, sans-serif; color: #1f1f1f; }
    .toolbar { display: flex; align-items: center; height: 76px; padding: 0 47px 2px 20px; flex: none; }
    .group { display: flex; gap: 30px; margin-left: 49px; }
    .toolbar .split { width: 1px; height: 30px; margin: 0 28px 0 26px; background: #e3e3e3; }
    .toolbar .group + .split + .group { margin-left: 0; margin-right: 23px; }
    .pages { display: flex; align-items: center; gap: 23px; margin-left: auto; font-size: 19px; color: #5f6368; }
    .scroller { display: flex; flex: 1; min-height: 0; }
    .sheet { flex: 1; min-width: 0; padding: 24px 28px 0 25px; }
    .track { width: 18px; flex: none; }
    .thumb { height: 78%; background: #cacaca; border: 1px solid #bdbdbd; border-right: 0; }
    .subject { display: flex; align-items: center; min-height: 58px; padding-left: 89px; margin-bottom: 25px; }
    .subject h1 { margin: 0 21px 0 0; font-size: 34px; line-height: 44px; font-weight: 400; }
    .subject .mark { color: #8b8d8f; }
    .chip { display: flex; align-items: center; gap: 6px; height: 29px; margin-left: 13px; padding: 0 5px 0 7px; border-radius: 6px; background: #e1e3e1; color: #444746; font-size: 19px; }
    .chip button { display: flex; }
    .right { display: flex; margin-left: auto; gap: 17px; }
    .from { display: flex; gap: 25px; }
    .who { flex: 1; }
    .sender { font-size: 24px; line-height: 31px; font-weight: 700; }
    .to { display: flex; align-items: center; gap: 6px; font-size: 19px; line-height: 32px; color: #5f6368; }
    .to .glyph { color: #444746; }
    .meta { display: flex; align-items: center; height: 32px; gap: 24px; font-size: 19px; color: #5f6368; }
    .meta time { margin-right: 2px; }
    .body { margin: 33px 10px 82px 89px; font-family: "Liberation Sans", Arial, sans-serif; font-size: 21px; line-height: 31px; color: #222; }
    .body p { margin: 0 0 20px; }
    .answers { display: flex; gap: 13px; padding-left: 89px; }
    .pill { display: flex; align-items: center; justify-content: center; gap: 16px; min-width: 165px; height: 57px; padding: 0 27px 0 17px; border: 1px solid #747775; border-radius: 29px; color: #444746; font-size: 23px; font-weight: 500; }
    .round { min-width: 57px; padding: 0; }
  `];

  render() {
    return html`
      <div class="toolbar">
        ${iconButton("back", "Back to Inbox", 29)}
        <div class="group">
          ${iconButton("archive", "Archive", 29)}
          ${iconButton("report", "Report spam", 29)}
          ${iconButton("trash", "Delete", 29)}
        </div>
        <span class="split"></span>
        <div class="group">
          ${iconButton("unread", "Mark as unread", 30)}
          ${iconButton("move", "Move to", 30)}
        </div>
        ${iconButton("more", "More", 27)}
        <div class="pages">
          <span>1 of 96</span>
          ${iconButton("chevronLeft", "Newer", 29, "dim")}
          ${iconButton("chevronRight", "Older", 29)}
        </div>
      </div>
      <div class="scroller">
        <article class="sheet">
          <header class="subject">
            <h1>Trial Period Started</h1>
            <span class="mark">${glyph("important", 31)}</span>
            <span class="chip">Inbox<button type="button" aria-label="Remove label Inbox">${glyph("close", 16)}</button></span>
            <div class="right">
              ${iconButton("print", "Print all", 30)}
              ${iconButton("popout", "In new window", 30)}
            </div>
          </header>
          <div class="from">
            ${personMark}
            <div class="who">
              <div class="sender">anandofc99@gmail.com</div>
              <div class="to"><span>to davejohnston9+2</span>${glyph("caretDown", 20)}</div>
            </div>
            <div class="meta">
              <time>5:25\u202fPM (9 minutes ago)</time>
              ${iconButton("star", "Star", 28)}
              ${iconButton("smile", "Add reaction", 31)}
              ${iconButton("reply", "Reply", 29)}
              ${iconButton("more", "More", 27)}
            </div>
          </div>
          <div class="body">
            <p>Dear david2,</p>
            <p>Your subscription to the Budget D2 Plan plan has started with a 1-day trial period. The subscription will run for one billing cycle after the trial and then automatically cancel.</p>
            <p>Best regards,<br>Your Company Name</p>
          </div>
          <div class="answers">
            <button type="button" class="pill">${glyph("reply", 30)}Reply</button>
            <button type="button" class="pill">${glyph("replyAll", 30)}Reply all</button>
            <button type="button" class="pill">${glyph("forwardMail", 30)}Forward</button>
            <button type="button" class="pill round" aria-label="Add reaction">${glyph("smile", 32)}</button>
          </div>
        </article>
        <div class="track"><div class="thumb"></div></div>
      </div>`;
  }
}

@customElement("side-panel")
class SidePanel extends LitElement {
  static styles = [shared, css`
    :host { display: flex; flex-direction: column; align-items: center; width: 87px; padding: 24px 0 24px 3px; }
    .app { width: 40px; height: 40px; margin-bottom: 49px; display: flex; align-items: center; justify-content: center; }
    hr { width: 30px; height: 1px; margin: 0 0 50px; border: 0; background: #dadce0; }
    .icon-button { color: #000; }
    .collapse { margin-top: auto; color: #1f1f1f; }
  `];

  render() {
    return html`
      <button type="button" class="app" aria-label="Calendar">${calendarMark}</button>
      <button type="button" class="app" aria-label="Keep">${keepMark}</button>
      <button type="button" class="app" aria-label="Tasks">${tasksMark}</button>
      <button type="button" class="app" aria-label="Contacts">${contactsMark}</button>
      <hr>
      ${iconButton("plus", "Get add-ons", 32)}
      ${iconButton("chevronRight", "Hide side panel", 30, "collapse")}`;
  }
}

@customElement("compose-dock")
class ComposeDock extends LitElement {
  static styles = [shared, css`
    :host { display: flex; align-items: center; width: 520px; height: 62px; padding: 0 16px 0 26px; border-radius: 12px 12px 0 0; background: #f2f6fc; box-shadow: 0 6px 22px rgba(60, 64, 67, 0.4); font-family: Roboto, sans-serif; font-size: 23px; font-weight: 500; color: #041e49; }
    span { flex: 1; }
    .icon-button { width: 32px; }
  `];

  render() {
    return html`
      <span>Shot Caller pro issues</span>
      ${iconButton("dash", "Minimise", 22)}
      ${iconButton("expand", "Full screen", 23)}
      ${iconButton("close", "Close", 25)}`;
  }
}

@customElement("desktop-taskbar")
class DesktopTaskbar extends LitElement {
  static styles = [shared, css`
    :host { display: grid; grid-template-columns: 1fr auto 1fr; align-items: center; height: 60px; border-top: 1px solid #a9a9ac; background: #dad9db; font-family: "Noto Sans", "Open Sans", sans-serif; color: #1f1f1f; }
    .weather { position: relative; display: flex; align-items: center; gap: 9px; padding: 0 0 2px 25px; font-size: 15px; line-height: 20px; text-align: left; justify-self: start; }
    .weather small { display: block; font-size: 15px; color: #55565a; }
    .badge { position: absolute; left: 38px; top: -2px; width: 20px; height: 20px; border-radius: 50%; background: #c42b1c; color: #fff; font-size: 14px; line-height: 20px; text-align: center; }
    .center { display: flex; align-items: center; gap: 7px; }
    .app { position: relative; width: 48px; height: 48px; display: flex; align-items: center; justify-content: center; border-radius: 6px; }
    .open::after { content: ""; position: absolute; bottom: 0; width: 8px; height: 4px; border-radius: 2px; background: #7d7d7f; }
    .focused { background: #efeff0; }
    .focused::after { content: ""; position: absolute; bottom: 0; width: 20px; height: 4px; border-radius: 2px; background: #0078d4; }
    .who { position: absolute; left: 25px; top: 3px; width: 20px; height: 20px; border-radius: 50%; background: #8d6e63; color: #e4d8d4; font-size: 12px; line-height: 20px; font-weight: 600; }
    .find { display: flex; align-items: center; width: 274px; height: 39px; margin-left: 1px; padding: 0 7px 0 13px; border: 1px solid #c9c9cb; border-radius: 20px; background: #f4f4f4; }
    .find input { flex: 1; margin-left: 13px; height: 30px; font-size: 20px; }
    .find input::placeholder { color: #5c5c5c; opacity: 1; }
    .tray { display: flex; align-items: center; gap: 10px; justify-self: end; padding-right: 24px; }
    .tray button { display: flex; }
    .chevron { margin-right: 11px; }
    .cloud { margin-right: 10px; }
    .clock { margin: 0 -2px 0 9px; padding-bottom: 2px; font-size: 15px; line-height: 20px; text-align: right; }
  `];

  render() {
    return html`
      <button type="button" class="weather">
        ${weatherMark}<span class="badge">2</span>
        <span>16°C<small>Mostly cloudy</small></span>
      </button>
      <div class="center">
        <button type="button" class="app" aria-label="Start">${windowsMark}</button>
        <label class="find">
          ${art(20, 20, "0 0 20 20", svg`<circle cx="8.500" cy="8.500" r="7" fill="none" stroke="#1f1f1f" stroke-width="2"/><path d="M13.500 13.500l5 5" stroke="#1f1f1f" stroke-width="2.200" stroke-linecap="round"/>`)}
          <input type="text" placeholder="Search" aria-label="Search">
          ${moonScene}
        </label>
        ${APPS.map((a) => html`
          <button type="button" class=${classMap({ app: true, open: !!a.open, focused: !!a.focused })} aria-label=${a.name}>
            ${a.mark}${a.focused ? html`<span class="who">D</span>` : nothing}
          </button>`)}
      </div>
      <div class="tray">
        <button type="button" class="chevron" aria-label="Show hidden icons">${art(16, 16, "0 0 16 16", svg`<path d="M2 11l6-6 6 6" fill="none" stroke="#1f1f1f" stroke-width="1.800"/>`)}</button>
        <button type="button" class="cloud" aria-label="OneDrive">${cloudMark}</button>
        <button type="button" aria-label="Network">${wifiMark}</button>
        <button type="button" aria-label="Volume">${volumeMark}</button>
        <button type="button" aria-label="Battery">${batteryMark}</button>
        <div class="clock">17:34<br>20/07/2025</div>
        <button type="button" aria-label="Notifications">${bellMark}</button>
      </div>`;
  }
}

@customElement("app-root")
class AppRoot extends LitElement {
  static styles = css`
    :host { display: flex; flex-direction: column; height: 100vh; overflow: hidden; background: #f9fbff; }
    .mail { position: relative; display: flex; flex-direction: column; flex: 1; min-height: 0; overflow: hidden; }
    .columns { display: grid; grid-template-columns: auto 1fr auto; flex: 1; min-height: 0; }
    mail-message { margin-bottom: 25px; }
    compose-dock { position: absolute; right: 111px; bottom: 0; }
  `;

  render() {
    return html`
      <browser-chrome></browser-chrome>
      <main class="mail">
        <mail-header></mail-header>
        <div class="columns">
          <mail-sidebar></mail-sidebar>
          <mail-message></mail-message>
          <side-panel></side-panel>
        </div>
        <compose-dock></compose-dock>
      </main>
      <desktop-taskbar></desktop-taskbar>`;
  }
}
